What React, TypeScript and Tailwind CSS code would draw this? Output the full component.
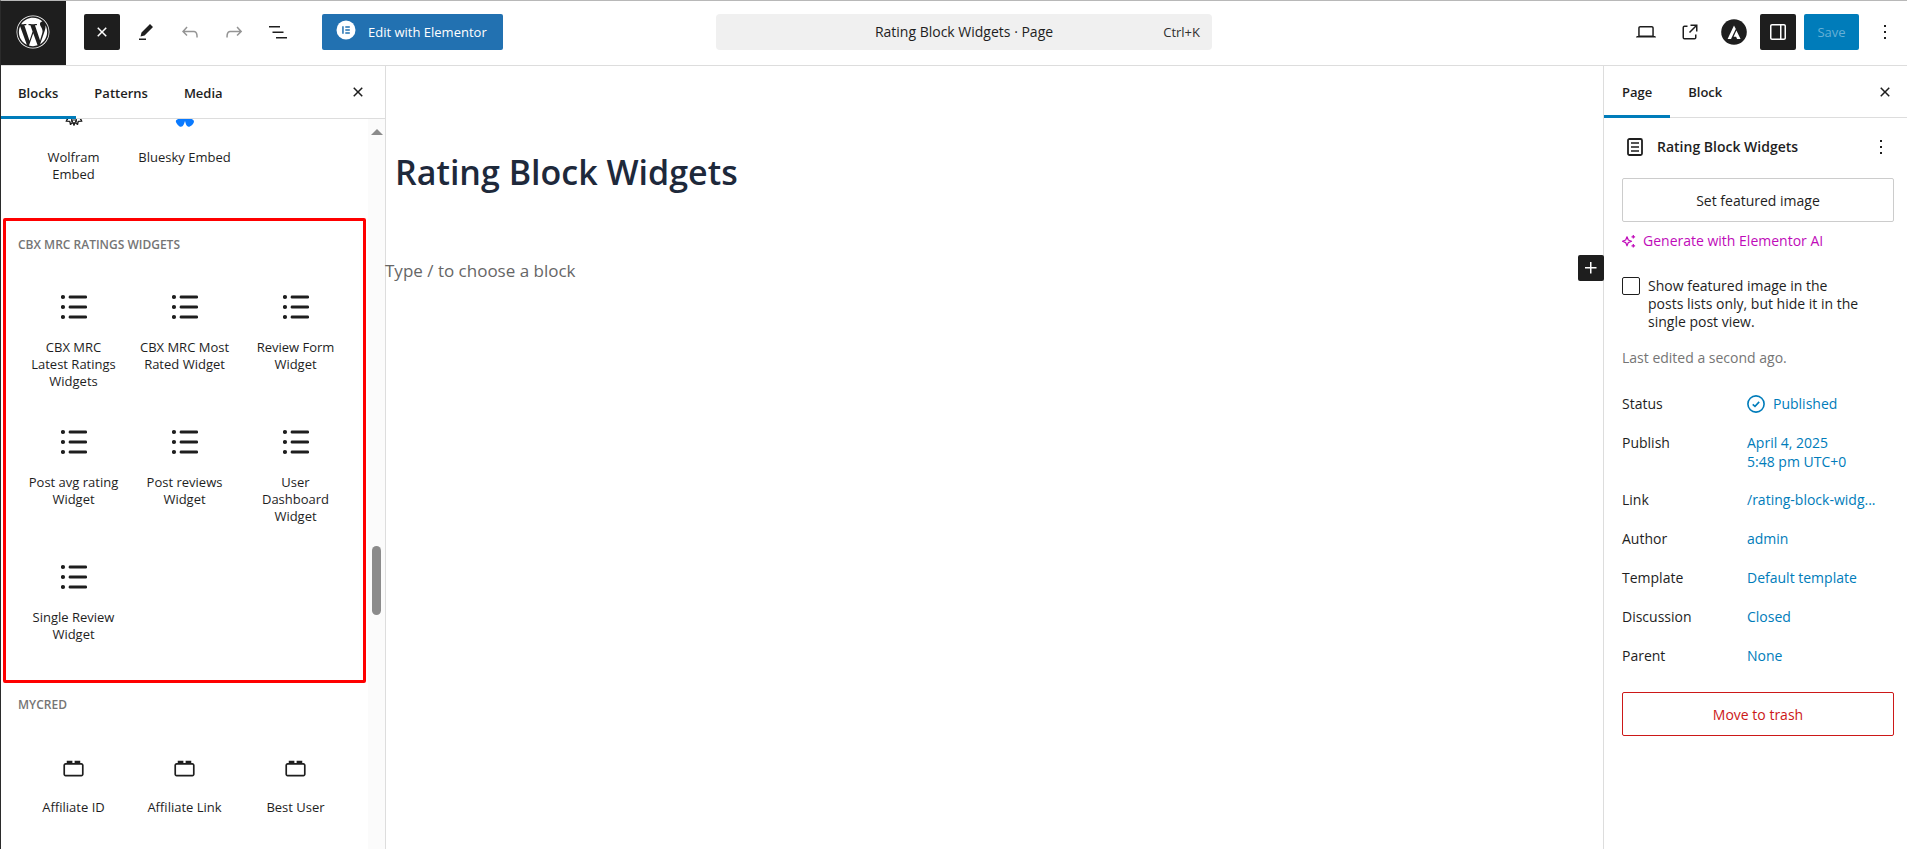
import React, { useState } from "react";
import { FaBluesky, FaWordpress } from "react-icons/fa6";

const paths = {
  close:
    "M12 13.06l3.712 3.713 1.061-1.06L13.061 12l3.712-3.712-1.06-1.06L12 10.938 8.288 7.227l-1.061 1.06L10.939 12l-3.712 3.712 1.06 1.061L12 13.061z",
  edit: "m19 7-3-3-8.5 8.5-1 4 4-1L19 7Zm-7 11.5H5V20h7v-1.5Z",
  undo: "M18.3 11.7c-.6-.6-1.4-.9-2.3-.9H6.7l2.9-3.3-1.1-1-4.5 5L8.5 16l1-1-2.7-2.7H16c.5 0 .9.2 1.3.5 1 1 1 3.4 1 4.5v.3h1.5v-.2c0-1.5 0-4.3-1.5-5.7z",
  redo: "M15.6 6.5l-1.1 1 2.9 3.3H8c-.9 0-1.7.3-2.3.9-1.4 1.5-1.4 4.2-1.4 5.6v.2h1.5v-.3c0-1.1 0-3.5 1-4.5.3-.3.7-.5 1.3-.5h9.2L14.5 15l1.1 1.1 4.6-4.6-4.6-5z",
  listView: "M3 6h11v1.5H3V6Zm3.5 5.5h11V13h-11v-1.5ZM21 17H10v1.5h11V17Z",
  desktop:
    "M20.5 16h-.7V8c0-1.1-.9-2-2-2H6.2c-1.1 0-2 .9-2 2v8h-.7c-.8 0-1.5.7-1.5 1.5h20c0-.8-.7-1.5-1.5-1.5zM5.7 8c0-.3.2-.5.5-.5h11.6c.3 0 .5.2.5.5v7.6H5.7V8z",
  external:
    "M19.5 4.5h-7V6h4.44l-5.97 5.97 1.06 1.06L18 7.06v4.44h1.5v-7Zm-13 1a2 2 0 0 0-2 2v10a2 2 0 0 0 2 2h10a2 2 0 0 0 2-2v-3H17v3a.5.5 0 0 1-.5.5h-10a.5.5 0 0 1-.5-.5v-10a.5.5 0 0 1 .5-.5h3V5.5h-3Z",
  drawer:
    "M18 4H6c-1.1 0-2 .9-2 2v12c0 1.1.9 2 2 2h12c1.1 0 2-.9 2-2V6c0-1.1-.9-2-2-2zm-4 14.5H6c-.3 0-.5-.2-.5-.5V6c0-.3.2-.5.5-.5h8v13zm4.5-.5c0 .3-.2.5-.5.5h-2.5v-13H18c.3 0 .5.2.5.5v12z",
  more: "M13 19h-2v-2h2v2zm0-6h-2v-2h2v2zm0-6h-2V5h2v2z",
  plus: "M11 12.5V17.5H12.5V12.5H17.5V11H12.5V6H11V11H6V12.5H11Z",
  block:
    "M19 8h-1V6h-5v2h-2V6H6v2H5c-1.1 0-2 .9-2 2v8c0 1.1.9 2 2 2h14c1.1 0 2-.9 2-2v-8c0-1.1-.9-2-2-2zm.5 10c0 .3-.2.5-.5.5H5c-.3 0-.5-.2-.5-.5v-8c0-.3.2-.5.5-.5h14c.3 0 .5.2.5.5v8z",
};

function Icon({ name, className = "size-6" }: { name: keyof typeof paths; className?: string }) {
  return (
    <svg viewBox="0 0 24 24" className={className} fill="currentColor" fillRule="evenodd" aria-hidden="true">
      <path d={paths[name]} />
    </svg>
  );
}

function PageIcon() {
  return (
    <svg viewBox="0 0 16 18" className="h-[18px] w-4" fill="none" stroke="currentColor" aria-hidden="true">
      <rect x="1" y="1" width="14" height="16" rx="1.5" strokeWidth="1.8" />
      <path d="M4 5h8M4 9h8M4 13h8" strokeWidth="1.5" />
    </svg>
  );
}

function ListIcon() {
  return (
    <svg viewBox="0 0 26 26" className="size-[26px]" fill="currentColor" aria-hidden="true">
      {[3, 13, 23].map((y) => (
        <g key={y}>
          <circle cx="2" cy={y} r="2.1" />
          <rect x="7.7" y={y - 1.6} width="18.3" height="3.2" rx="1.3" />
        </g>
      ))}
    </svg>
  );
}

/* Spiked polyhedron: a twelve-point star around a pentagon with spokes. */
function WolframIcon() {
  return (
    <svg viewBox="0 0 20 20" className="size-5" fill="none" stroke="currentColor" strokeLinejoin="round" aria-hidden="true">
      <path
        d="M10 1.2 12.3 4.6 16 3.2 15.7 7.1 19.2 9 16.4 11.2 17.8 14.2 14.3 14.4 13.6 17.4 10.9 15.6 10 18.4 9.1 15.6 6.4 17.4 5.7 14.4 2.2 14.2 3.6 11.2.8 9 4.3 7.1 4 3.2 7.7 4.6Z"
        strokeWidth="1.2"
      />
      <path d="M10 6.2 13.6 8.9 12.2 13H7.8L6.4 8.9ZM12.2 13l1.4 4.4M7.8 13l-1.4 4.4M7.8 13 10 17.6 12.2 13M6.4 8.9 2.2 14.2M13.6 8.9l4.2 5.3" strokeWidth="1" />
    </svg>
  );
}

function AstraIcon() {
  return (
    <svg viewBox="0 0 26 26" className="size-[26px]" aria-hidden="true">
      <circle cx="13" cy="13" r="12.8" fill="#1e1e1e" />
      <path d="M13 6.4 14.8 10 10 20H6.6Z" fill="#fff" />
      <path d="M15.4 11.4 19.6 20h-3.5l-1-2.2h-2.5Z" fill="#fff" />
    </svg>
  );
}

function ElementorIcon() {
  return (
    <svg viewBox="0 0 20 20" className="size-5" aria-hidden="true">
      <circle cx="10" cy="10" r="9.5" fill="#fff" />
      <path d="M6.2 6.2h1.5v7.6H6.2zM9.3 6.2h4.5v1.5H9.3zM9.3 9.25h4.5v1.5H9.3zM9.3 12.3h4.5v1.5H9.3z" fill="#2271b1" />
    </svg>
  );
}

function SparkleIcon() {
  return (
    <svg viewBox="0 0 14 14" className="size-3.5" fill="none" stroke="currentColor" aria-hidden="true">
      <path d="M5 2.8 6.3 6 9.5 7.3 6.3 8.6 5 11.8 3.7 8.6.5 7.3 3.7 6Z" strokeWidth="1.2" strokeLinejoin="round" />
      <path d="M11.3 1v3.6M9.5 2.8h3.6M11.3 10v3.6M9.5 11.8h3.6" strokeWidth="1.2" />
    </svg>
  );
}

function PublishedIcon() {
  return (
    <svg viewBox="0 0 18 18" className="size-[18px]" fill="none" stroke="currentColor" aria-hidden="true">
      <circle cx="9" cy="9" r="8.1" strokeWidth="1.6" />
      <path d="m5.7 9.3 2.3 2.1 4.2-4.5" strokeWidth="1.6" />
    </svg>
  );
}

const iconButton = "flex size-9 shrink-0 items-center justify-center rounded-xs";

function BlockItem({ icon, label }: { icon: React.ReactNode; label: string }) {
  return (
    <li>
      <button type="button" className="flex w-full flex-col items-center px-[9px] pt-3 pb-[21px]">
        <span className="flex h-[38px] items-center justify-center">{icon}</span>
        <span className="mt-[13px] text-center text-[13px] leading-[17px]">{label}</span>
      </button>
    </li>
  );
}

function Grid({ items, icon }: { items: string[]; icon: React.ReactNode }) {
  return (
    <ul className="mt-[23px] grid grid-cols-3">
      {items.map((label) => (
        <BlockItem key={label} label={label} icon={icon} />
      ))}
    </ul>
  );
}

const headingStyle = "text-xs leading-4 font-semibold text-[#757575] uppercase";

function Inserter() {
  return (
    <aside className="flex w-[385px] shrink-0 flex-col border-r border-[#ddd]">
      <div className="flex h-[53px] shrink-0 border-b border-[#ddd] text-[13px] font-semibold">
        <button type="button" className="-mb-px border-b-3 border-[#007cba] pt-1 pr-[18px] pl-[17px]">Blocks</button>
        <button type="button" className="px-[18px] pt-0.5">Patterns</button>
        <button type="button" className="px-[18px] pt-0.5">Media</button>
        <button type="button" aria-label="Close block inserter" className="mr-[15px] ml-auto">
          <Icon name="close" />
        </button>
      </div>
      <div className="flex min-h-0 flex-1">
        <div className="flex-1 overflow-hidden">
          <ul className="-mt-[33px] grid grid-cols-3 px-[17px] pb-3.5">
            <BlockItem icon={<WolframIcon />} label="Wolfram Embed" />
            <BlockItem icon={<FaBluesky className="size-[22px] text-[#0a7aff]" />} label="Bluesky Embed" />
          </ul>
          <section className="mx-0.5 rounded-xs border-3 border-[#f00] px-3 pt-4 pb-4">
            <h2 className={headingStyle}>CBX MRC Ratings Widgets</h2>
            <Grid
              icon={<ListIcon />}
              items={[
                "CBX MRC Latest Ratings Widgets",
                "CBX MRC Most Rated Widget",
                "Review Form Widget",
                "Post avg rating Widget",
                "Post reviews Widget",
                "User Dashboard Widget",
                "Single Review Widget",
              ]}
            />
          </section>
          <section className="px-[17px] pt-3.5">
            <h2 className={headingStyle}>myCred</h2>
            <Grid icon={<Icon name="block" className="size-[27px]" />} items={["Affiliate ID", "Affiliate Link", "Best User"]} />
          </section>
        </div>
        <div className="relative w-[17px] shrink-0 bg-[#fbfbfb]" aria-hidden="true">
          <svg viewBox="0 0 12 6" className="absolute top-[10px] left-[3px] h-1.5 w-3" fill="#8b8b8b">
            <path d="M0 6 6 0l6 6Z" />
          </svg>
          <div className="absolute top-[427px] left-1 h-[69px] w-[9px] rounded-full bg-[#8b8b8b]" />
        </div>
      </div>
    </aside>
  );
}

const summary: { label: string; value: React.ReactNode }[] = [
  { label: "Status", value: <span className="flex items-center gap-2"><PublishedIcon />Published</span> },
  { label: "Publish", value: <>April 4, 2025<br />5:48 pm UTC+0</> },
  { label: "Link", value: "/rating-block-widg..." },
  { label: "Author", value: "admin" },
  { label: "Template", value: "Default template" },
  { label: "Discussion", value: "Closed" },
  { label: "Parent", value: "None" },
];

function Settings() {
  const [hide, setHide] = useState(false);
  return (
    <aside className="w-[304px] shrink-0 border-l border-[#ddd]">
      <div className="flex h-[52px] border-b border-[#ddd] text-[13px] font-semibold">
        <button type="button" className="-mb-px border-b-3 border-[#007cba] px-[18px] pt-0.5">Page</button>
        <button type="button" className="px-[18px]">Block</button>
        <button type="button" aria-label="Close settings" className="mr-2.5 ml-auto">
          <Icon name="close" />
        </button>
      </div>
      <div className="pr-[13px] pl-[18px]">
        <div className="flex h-[60px] items-center pr-px pb-0.5 pl-[5px]">
          <PageIcon />
          <h2 className="ml-3.5 font-semibold">Rating Block Widgets</h2>
          <button type="button" aria-label="Actions" className="ml-auto">
            <Icon name="more" />
          </button>
        </div>
        <button type="button" className="h-11 w-full rounded-xs border border-[#ccc] pt-0.5">Set featured image</button>
        <button type="button" className="mt-[7px] flex h-6 items-center gap-[7px] text-[#c00bb9]">
          <SparkleIcon />
          Generate with Elementor AI
        </button>
        <div className="mt-6 flex gap-2">
          <input
            id="hide-featured"
            type="checkbox"
            checked={hide}
            onChange={(e) => setHide(e.target.checked)}
            className="size-[18px] shrink-0 appearance-none rounded-xs border border-[#1e1e1e] checked:bg-[#007cba]"
          />
          <label htmlFor="hide-featured" className="max-w-[216px] leading-[18px]">
            Show featured image in the posts lists only, but hide it in the single post view.
          </label>
        </div>
        <p className="mt-[17px] text-[#757575]">Last edited a second ago.</p>
        <dl className="mt-5 flex flex-col gap-[7px]">
          {summary.map(({ label, value }) => (
            <div key={label} className="flex">
              <dt className="w-[125px] py-1.5">{label}</dt>
              <dd className="py-1.5 text-[#007cba]">
                <button type="button" className="block text-left leading-[19px]">{value}</button>
              </dd>
            </div>
          ))}
        </dl>
        <button type="button" className="mt-5 h-11 w-full rounded-xs border border-[#cc1818] pt-0.5 text-[#cc1818]">
          Move to trash
        </button>
      </div>
    </aside>
  );
}

function Header() {
  return (
    <header className="flex h-[65px] shrink-0 border-b border-[#ddd]">
      <div className="mr-6 flex min-w-0 flex-1">
        <a href="#" aria-label="View Pages" className="flex w-[65px] shrink-0 items-center justify-center bg-[#1e1e1e] pr-0.5 pb-0.5 text-white">
          <FaWordpress className="size-[34px]" />
        </a>
        <div className="flex items-center gap-2 pb-0.5 pl-[18px] text-[#1e1e1e]">
          <button type="button" aria-label="Toggle block inserter" className={`${iconButton} bg-[#1e1e1e] text-white`}>
            <Icon name="close" />
          </button>
          <button type="button" aria-label="Tools" className={iconButton}><Icon name="edit" /></button>
          <button type="button" aria-label="Undo" className={`${iconButton} text-[#949494]`}><Icon name="undo" /></button>
          <button type="button" aria-label="Redo" className={`${iconButton} text-[#949494]`}><Icon name="redo" /></button>
          <button type="button" aria-label="Document overview" className={iconButton}><Icon name="listView" /></button>
          <button type="button" className="ml-[18px] flex h-9 items-center gap-3 rounded-xs bg-[#2271b1] pr-4 pl-3.5 text-[13px] text-white">
            <span className="pb-1"><ElementorIcon /></span>
            Edit with Elementor
          </button>
        </div>
      </div>
      <button type="button" className="mt-[13px] grid h-9 w-[496px] grid-cols-[1fr_auto_1fr] items-center rounded-sm bg-[#f0f0f0] px-3">
        <span className="col-start-2">Rating Block Widgets · Page</span>
        <span className="text-right text-[13px] text-[#2f2f2f]">Ctrl+K</span>
      </button>
      <div className="flex min-w-0 flex-1 items-center justify-end gap-2 pr-1 pb-0.5">
        <button type="button" aria-label="View" className={iconButton}><Icon name="desktop" /></button>
        <button type="button" aria-label="View page" className={iconButton}><Icon name="external" /></button>
        <button type="button" aria-label="Astra settings" className={iconButton}><AstraIcon /></button>
        <button type="button" aria-label="Settings" className={`${iconButton} bg-[#1e1e1e] text-white`}>
          <Icon name="drawer" />
        </button>
        <button type="button" className="h-9 w-[55px] rounded-xs bg-[#007cba] text-[13px] text-[#66b0d6]">Save</button>
        <button type="button" aria-label="Options" className={iconButton}><Icon name="more" /></button>
      </div>
    </header>
  );
}

export default function App() {
  return (
    <div className="flex h-screen flex-col overflow-hidden border-t border-l border-t-[#b8b8b8] border-l-[#2b2b2b] bg-white font-['Open_Sans','Noto_Sans',sans-serif] text-sm leading-5 text-[#1e1e1e]">
      <Header />
      <div className="flex min-h-0 flex-1">
        <Inserter />
        <main className="relative min-w-0 flex-1">
          <h1 className="mt-[81px] ml-[9px] text-[34px] leading-[50px] font-semibold text-[#1e293b]">Rating Block Widgets</h1>
          <p className="mt-[60px] -ml-px text-[17px] leading-7 text-[#666]">Type / to choose a block</p>
          <button
            type="button"
            aria-label="Add block"
            className="absolute top-[189px] -right-px flex size-[26px] items-center justify-center rounded-xs bg-[#1e1e1e] text-white"
          >
            <Icon name="plus" />
          </button>
        </main>
        <Settings />
      </div>
    </div>
  );
}
